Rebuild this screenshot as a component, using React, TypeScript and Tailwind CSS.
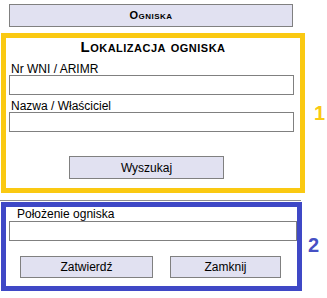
import React from "react";

const font = { fontFamily: '"Liberation Sans", Arial, sans-serif' };

function Input({ className = "" }: { className?: string }) {
  return <div className={`h-[20px] border border-[#808080] bg-white ${className}`} />;
}

function Btn({ label, className = "" }: { label: string; className?: string }) {
  return (
    <div
      className={`flex items-center justify-center border border-[#808080] bg-[#e1e1f1] text-[12px] text-black ${className}`}
    >
      {label}
    </div>
  );
}

export default function App() {
  return (
    <div className="w-[327px] h-[298px] bg-white flex flex-col text-black" style={font}>
      <div className="ml-[9px] mt-[4px] w-[284px] h-[23px] border border-[#808080] bg-[#e1e1f1] flex items-center justify-center text-[11px] font-bold tracking-[0.5px] [font-variant:small-caps]">
        Ogniska
      </div>

      <div className="mt-[6px] flex items-start">
        <div className="ml-[1px] w-[304px] h-[160px] border-[5px] border-[#fac912] flex flex-col">
          <div className="mt-[1px] h-[15px] flex items-center justify-center text-[15px] font-bold leading-[15px] tracking-[0.5px] [font-variant:small-caps]">
            Lokalizacja ogniska
          </div>
          <div className="ml-[5px] mt-[10px] h-[11px] text-[12px] leading-[11px]">Nr WNI / ARIMR</div>
          <Input className="ml-[3px] w-[285px]" />
          <div className="ml-[5px] mt-[6px] h-[11px] text-[12px] leading-[11px]">Nazwa / Właściciel</div>
          <Input className="ml-[3px] w-[285px]" />
          <Btn label="Wyszukaj" className="ml-[63px] mt-[24px] w-[155px] h-[23px]" />
        </div>
        <div className="ml-[9px] mt-[70px] text-[20px] font-bold text-[#fac912] leading-none">1</div>
      </div>

      <div className="mt-[7px] w-[301px] h-[1px] bg-[#8c8c8c]" />

      <div className="mt-[1px] flex items-start">
        <div className="ml-[1px] w-[301px] h-[89px] border-[5px] border-[#3f48c6] flex flex-col">
          <div className="ml-[11px] h-[14px] text-[12px] leading-[14px]">Położenie ogniska</div>
          <Input className="ml-[3px] w-[288px]" />
          <div className="mt-[15px] flex">
            <Btn label="Zatwierdź" className="ml-[14px] w-[133px] h-[22px]" />
            <Btn label="Zamknij" className="ml-[17px] w-[111px] h-[22px]" />
          </div>
        </div>
        <div className="ml-[6px] mt-[33px] text-[20px] font-bold text-[#4650c4] leading-none">2</div>
      </div>
    </div>
  );
}
